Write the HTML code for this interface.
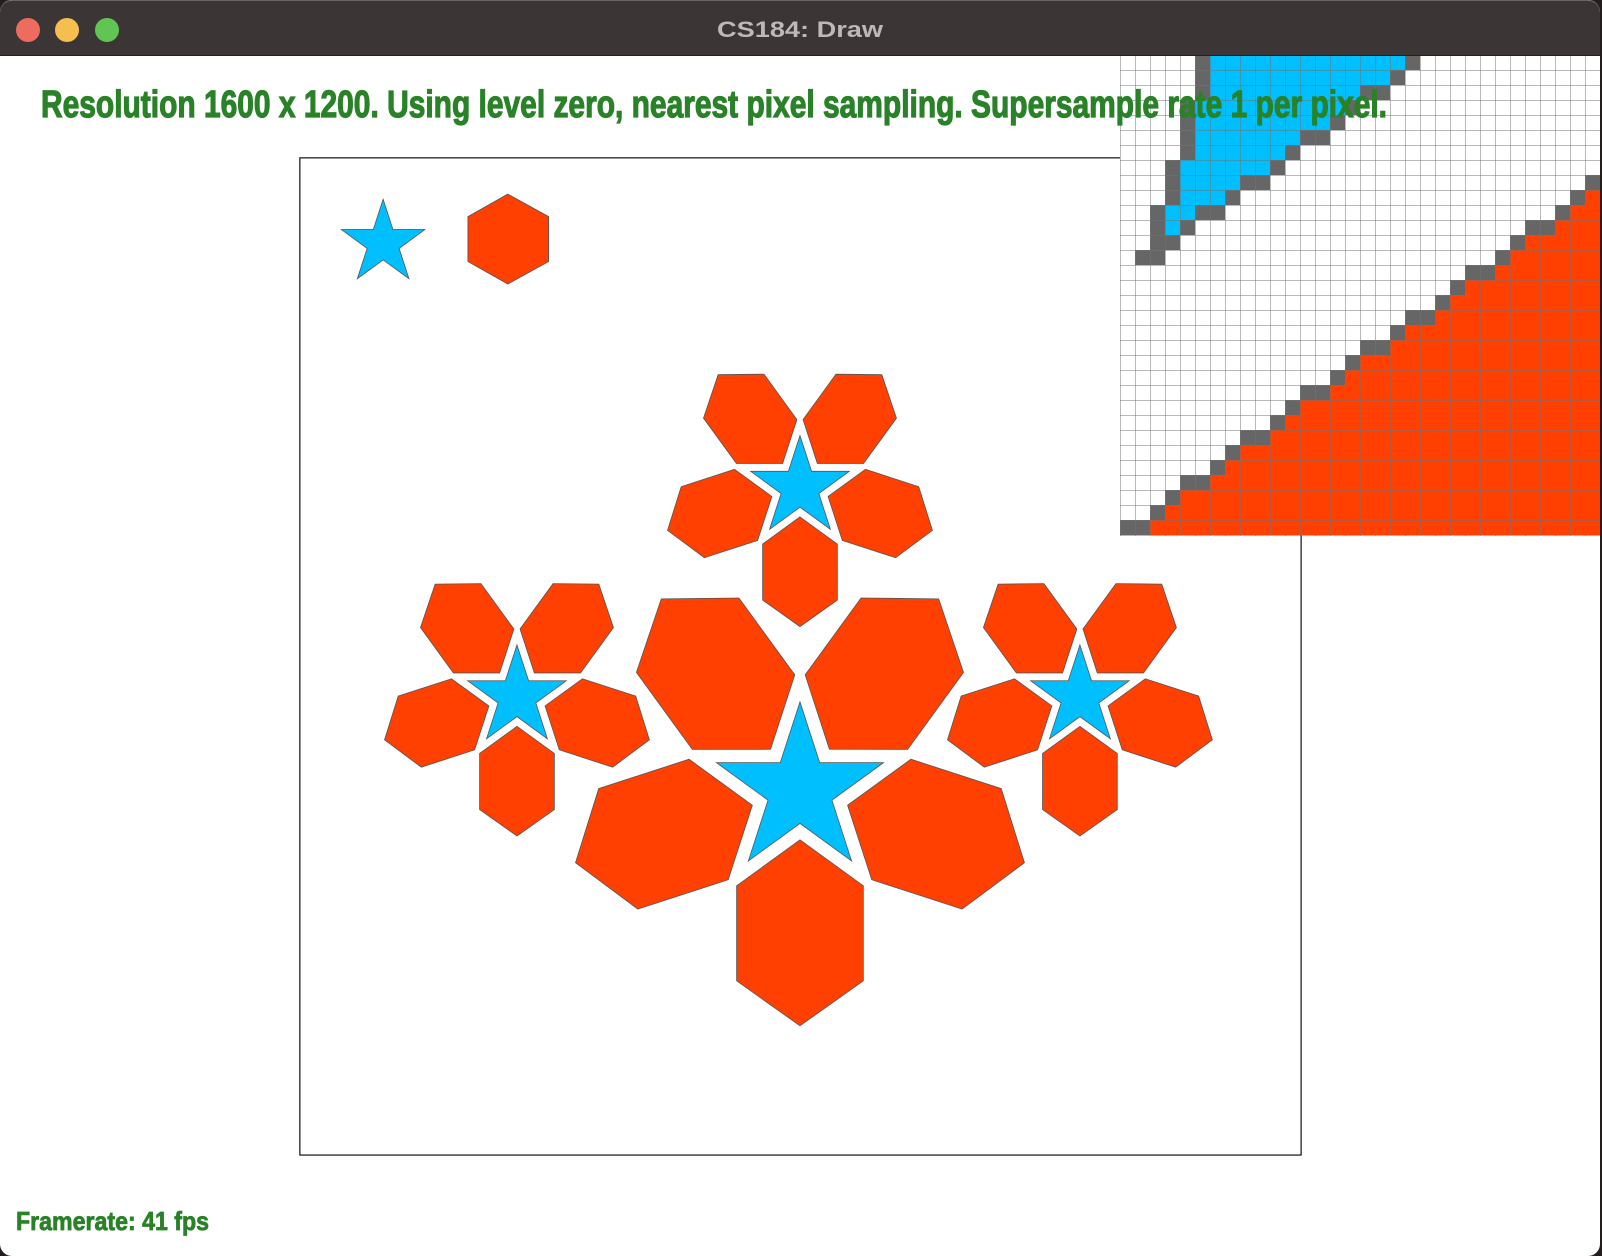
<!DOCTYPE html>
<html><head><meta charset="utf-8"><style>
html,body{margin:0;padding:0;}
body{width:1602px;height:1256px;background:#241d1d;position:relative;overflow:hidden;font-family:"Liberation Sans",sans-serif;}
#win{position:absolute;left:0;top:0;width:1600px;height:1256px;background:#fff;border-radius:12px;overflow:hidden;}
#tb{position:absolute;left:0;top:0;width:1600px;height:56px;background:#3b3535;border-bottom:1px solid #222;box-sizing:border-box;border-top:1px solid #6a6464;border-radius:12px 12px 0 0;}
.dot{position:absolute;top:17px;width:24px;height:24px;border-radius:50%;}
#grid{position:absolute;left:1120px;top:55px;width:480px;height:480px;}
#lines{position:absolute;left:1120px;top:55px;width:481px;height:481px;
background-image:linear-gradient(to right,rgba(115,115,115,.5) 1px,transparent 1px),linear-gradient(to bottom,rgba(115,115,115,.5) 1px,transparent 1px);
background-size:15px 15px;}
</style></head><body>
<div id="win">
<svg style="position:absolute;left:0;top:0" width="1602" height="1256" viewBox="0 0 1568 1229.3" preserveAspectRatio="none">
<defs>
<polygon id="star" points="0,-86 19.3,-26.6 81.8,-26.6 31.3,10.2 50.5,69.6 0,32.9 -50.5,69.6 -31.3,10.2 -81.8,-26.6 -19.3,-26.6" fill="#00bfff" stroke="#555" stroke-width="0.8" vector-effect="non-scaling-stroke"/>
<polygon id="hex" points="0,49 62,94 62,187 0,231 -62,187 -62,94" fill="#ff4000" stroke="#555" stroke-width="0.8" vector-effect="non-scaling-stroke"/>
<g id="cl">
<use href="#hex"/>
<use href="#hex" transform="rotate(72)"/>
<use href="#hex" transform="rotate(144)"/>
<use href="#hex" transform="rotate(216)"/>
<use href="#hex" transform="rotate(288)"/>
<use href="#star"/>
</g>
</defs>
<rect x="293.5" y="154.5" width="980" height="976" fill="#fff" stroke="#000" stroke-width="1.1"/>
<use href="#star" transform="translate(375,238) scale(0.5)"/>
<polygon points="497,190 537,212 537,256 497,278 458,256 458,212" fill="#ff4000" stroke="#555" stroke-width="0.8"/>
<use href="#cl" transform="translate(783,773)"/>
<use href="#cl" transform="translate(783,477) scale(0.59)"/>
<use href="#cl" transform="translate(506,682) scale(0.59)"/>
<use href="#cl" transform="translate(1057,682) scale(0.59)"/>
</svg>

<svg id="grid" width="480" height="480" viewBox="0 0 480 480">
<rect width="480" height="480" fill="#fff"/>
<g fill="#666">
<rect x="75" y="0" width="15" height="45"/><rect x="285" y="0" width="15" height="15"/><rect x="270" y="15" width="15" height="15"/><rect x="240" y="30" width="30" height="15"/>
<rect x="60" y="45" width="15" height="60"/><rect x="225" y="45" width="15" height="15"/><rect x="210" y="60" width="15" height="15"/><rect x="180" y="75" width="30" height="15"/><rect x="165" y="90" width="15" height="15"/>
<rect x="45" y="105" width="15" height="45"/><rect x="150" y="105" width="15" height="15"/><rect x="120" y="120" width="30" height="15"/><rect x="105" y="135" width="15" height="15"/>
<rect x="30" y="150" width="15" height="45"/><rect x="75" y="150" width="30" height="15"/><rect x="60" y="165" width="15" height="15"/><rect x="45" y="180" width="15" height="15"/><rect x="15" y="195" width="30" height="15"/>
</g>
<g fill="#00bfff">
<rect x="90" y="0" width="195" height="15"/><rect x="90" y="15" width="180" height="15"/><rect x="90" y="30" width="150" height="15"/>
<rect x="75" y="45" width="150" height="15"/><rect x="75" y="60" width="135" height="15"/><rect x="75" y="75" width="105" height="15"/><rect x="75" y="90" width="90" height="15"/>
<rect x="60" y="105" width="90" height="15"/><rect x="60" y="120" width="60" height="15"/><rect x="60" y="135" width="45" height="15"/>
<rect x="45" y="150" width="30" height="15"/><rect x="45" y="165" width="15" height="15"/>
</g>
<g fill="#ff4000">
<rect x="30" y="465" width="450" height="15"/><rect x="45" y="450" width="435" height="15"/><rect x="60" y="435" width="420" height="15"/><rect x="90" y="420" width="390" height="15"/>
<rect x="105" y="405" width="375" height="15"/><rect x="120" y="390" width="360" height="15"/><rect x="150" y="375" width="330" height="15"/><rect x="165" y="360" width="315" height="15"/>
<rect x="180" y="345" width="300" height="15"/><rect x="210" y="330" width="270" height="15"/><rect x="225" y="315" width="255" height="15"/><rect x="240" y="300" width="240" height="15"/>
<rect x="270" y="285" width="210" height="15"/><rect x="285" y="270" width="195" height="15"/><rect x="315" y="255" width="165" height="15"/><rect x="330" y="240" width="150" height="15"/>
<rect x="345" y="225" width="135" height="15"/><rect x="375" y="210" width="105" height="15"/><rect x="390" y="195" width="90" height="15"/><rect x="405" y="180" width="75" height="15"/>
<rect x="435" y="165" width="45" height="15"/><rect x="450" y="150" width="30" height="15"/><rect x="465" y="135" width="15" height="15"/>
</g>
<g fill="#666">
<rect x="0" y="465" width="30" height="15"/><rect x="30" y="450" width="15" height="15"/><rect x="45" y="435" width="15" height="15"/><rect x="60" y="420" width="30" height="15"/>
<rect x="90" y="405" width="15" height="15"/><rect x="105" y="390" width="15" height="15"/><rect x="120" y="375" width="30" height="15"/><rect x="150" y="360" width="15" height="15"/>
<rect x="165" y="345" width="15" height="15"/><rect x="180" y="330" width="30" height="15"/><rect x="210" y="315" width="15" height="15"/><rect x="225" y="300" width="15" height="15"/>
<rect x="240" y="285" width="30" height="15"/><rect x="270" y="270" width="15" height="15"/><rect x="285" y="255" width="30" height="15"/><rect x="315" y="240" width="15" height="15"/>
<rect x="330" y="225" width="15" height="15"/><rect x="345" y="210" width="30" height="15"/><rect x="375" y="195" width="15" height="15"/><rect x="390" y="180" width="15" height="15"/>
<rect x="405" y="165" width="30" height="15"/><rect x="435" y="150" width="15" height="15"/><rect x="450" y="135" width="15" height="15"/><rect x="465" y="120" width="15" height="15"/>
</g>
</svg>
<div id="lines"></div>

<svg style="position:absolute;left:0;top:0" width="1602" height="1256">
<text x="41" y="117" font-family="Liberation Sans, sans-serif" font-weight="bold" font-size="38" fill="#2a8228" stroke="#2a8228" stroke-width="1.2" textLength="1346" lengthAdjust="spacingAndGlyphs">Resolution 1600 x 1200. Using level zero, nearest pixel sampling. Supersample rate 1 per pixel.</text>
<text x="16" y="1230" font-family="Liberation Sans, sans-serif" font-weight="bold" font-size="26" fill="#2a8228" stroke="#2a8228" stroke-width="0.8" textLength="193" lengthAdjust="spacingAndGlyphs">Framerate: 41 fps</text>
</svg>

<div id="tb">
<div class="dot" style="left:16px;background:#ee6b60"></div>
<div class="dot" style="left:55px;background:#f5bf4f"></div>
<div class="dot" style="left:95px;background:#61c554"></div>
<svg style="position:absolute;left:0;top:0" width="1600" height="56">
<text x="800" y="36" text-anchor="middle" font-family="Liberation Sans, sans-serif" font-weight="bold" font-size="22" fill="#bdb9b9" textLength="166" lengthAdjust="spacingAndGlyphs">CS184: Draw</text>
</svg>
</div>
</div>
</body></html>
